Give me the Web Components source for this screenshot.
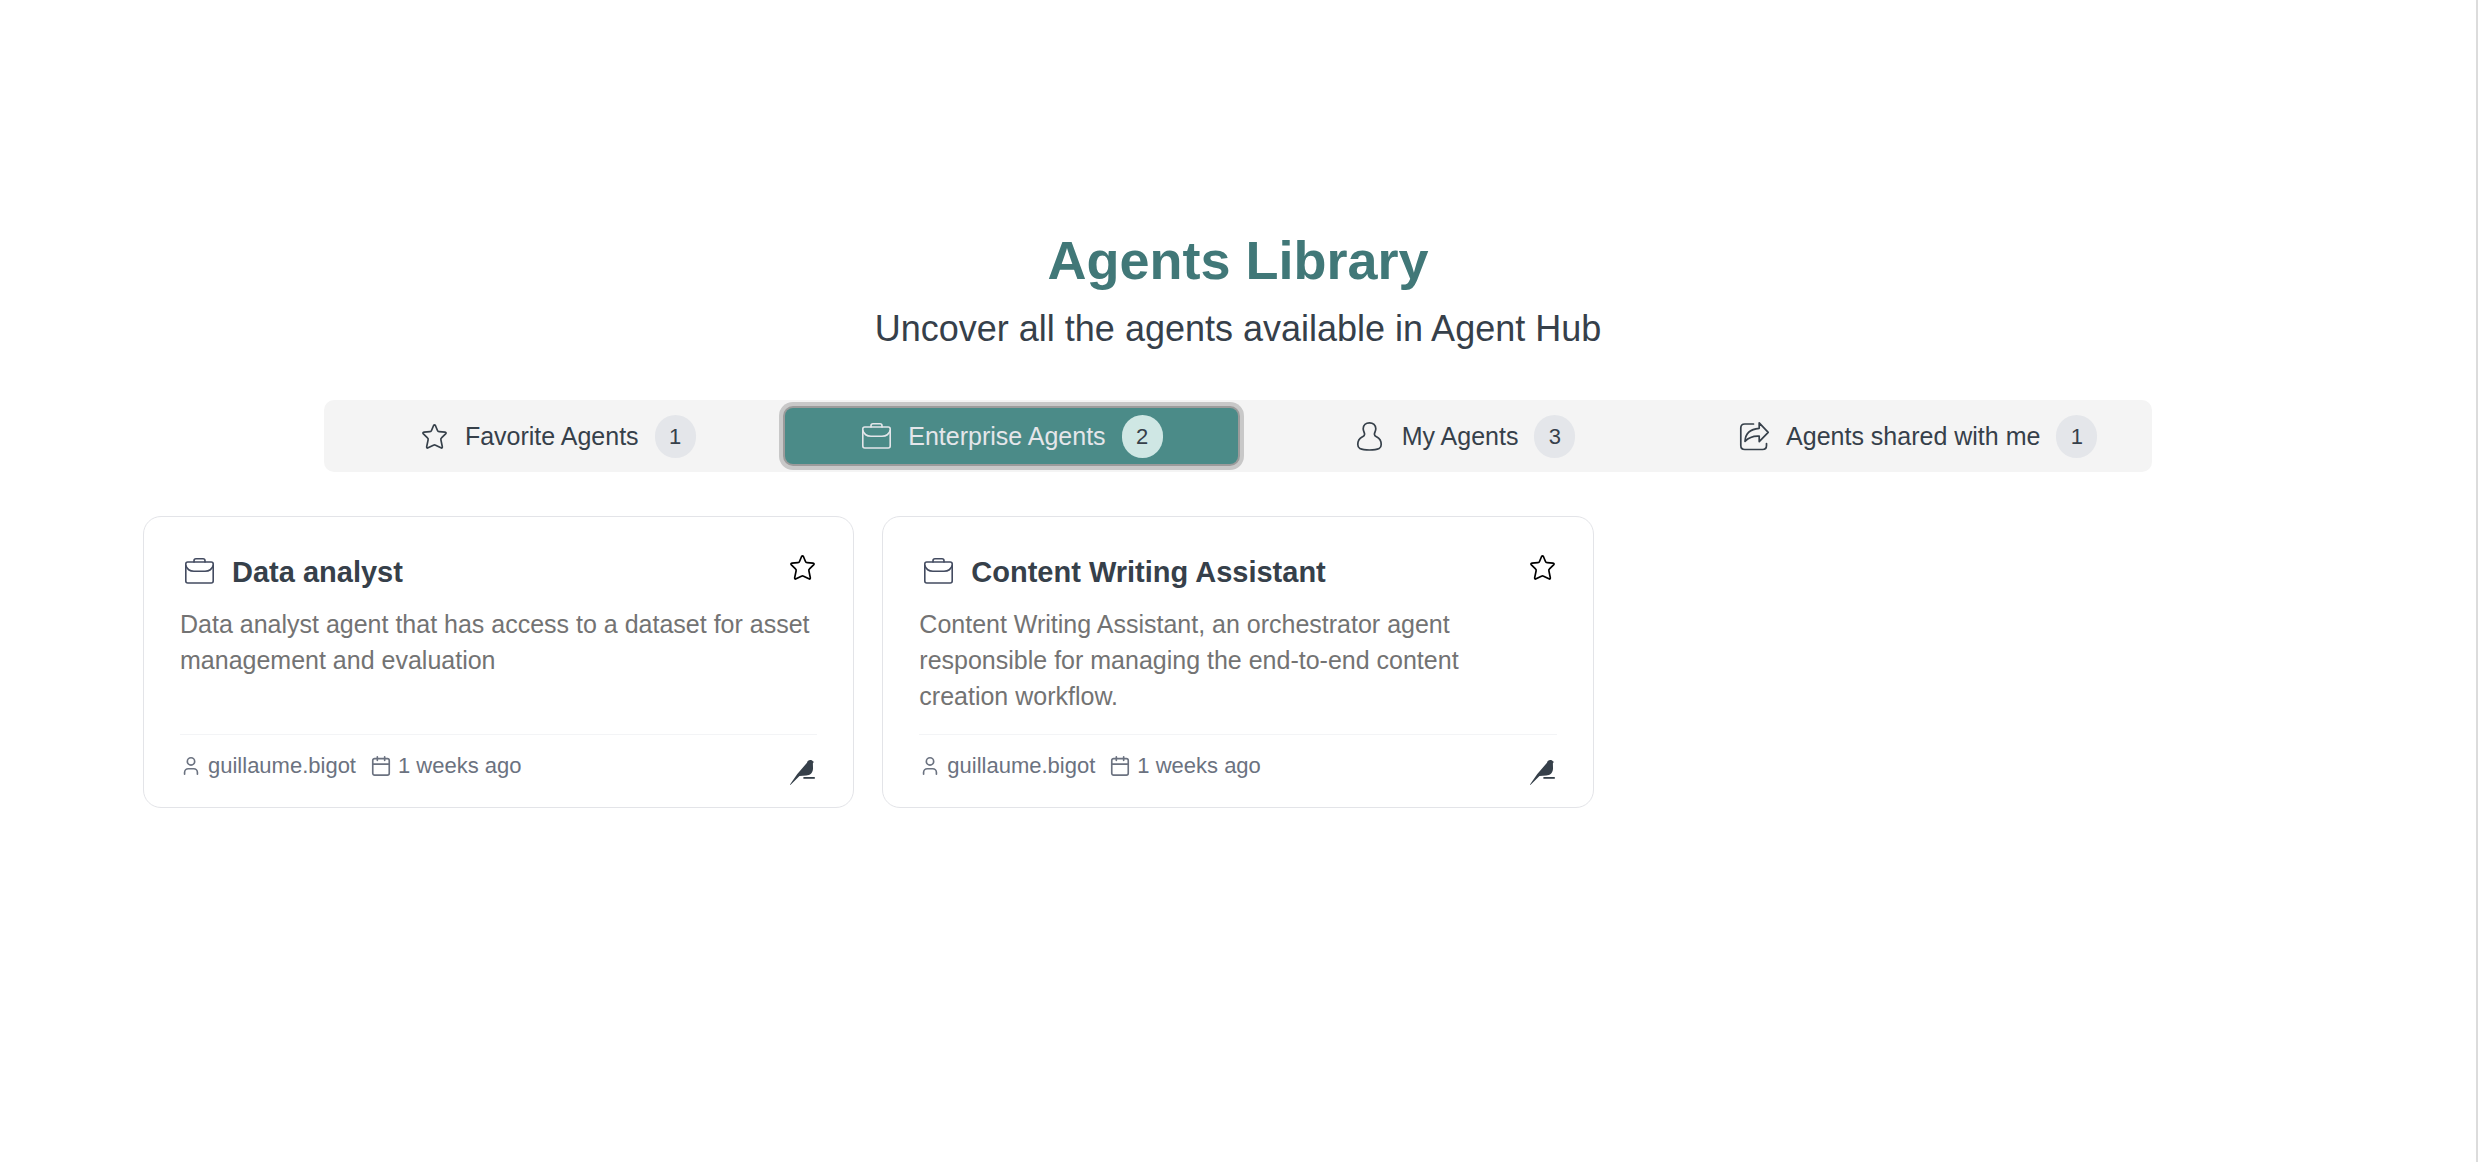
<!DOCTYPE html>
<html lang="en">
<head>
<meta charset="UTF-8">
<meta name="viewport" content="width=device-width, initial-scale=1">
<title>Agents Library</title>
<style>
  :root {
    --brand: #417878;
    --brand-fill: #4b8b88;
    --brand-soft: #cfe7e4;
    --text: #36404a;
    --muted: #737373;
    --meta: #6b7280;
    --bar: #f4f4f4;
    --badge: #e4e6ea;
    --card-border: #e3e4e8;
  }
  body {
    margin: 0;
    background: #fff;
    color: var(--text);
    font-family: "Liberation Sans", Arial, sans-serif;
  }
</style>
</head>
<body>
<agents-page>
  <page-title slot="header">
    Agents Library
    <span slot="subtitle">Uncover all the agents available in Agent Hub</span>
  </page-title>

  <agent-tabs slot="tabs">
    <agent-tab icon="star" count="1">Favorite Agents</agent-tab>
    <agent-tab icon="briefcase" count="2" selected>Enterprise Agents</agent-tab>
    <agent-tab icon="person" count="3">My Agents</agent-tab>
    <agent-tab icon="share" count="1">Agents shared with me</agent-tab>
  </agent-tabs>

  <agent-card name="Data analyst" author="guillaume.bigot" updated="1 weeks ago">Data analyst agent that has access to a dataset for asset management and evaluation</agent-card>
  <agent-card name="Content Writing Assistant" author="guillaume.bigot" updated="1 weeks ago">Content Writing Assistant, an orchestrator agent responsible for managing the end-to-end content creation workflow.</agent-card>
</agents-page>

<script>
const ICONS = {
  star: {
    box: '0 0 25 25', w: 25, h: 25, stroke: 1.7,
    body: '<path d="M11.6 1.5q.9-1.4 1.8 0l2.1 5q.4 1.1 1.6 1.2l5.9.5q1.8.3.6 1.6l-4.1 4q-.9.8-.6 2l1.4 6.8q.2 2-1.4 1.2l-5.3-2.6q-1.1-.5-2.2 0l-5.3 2.6q-1.6.8-1.4-1.2l1.4-6.8q.3-1.2-.6-2l-4.1-4q-1.2-1.3.6-1.6l5.9-.5q1.2-.1 1.6-1.2z"/>'
  },
  briefcase: {
    box: '0 0 29 26', w: 29, h: 26, stroke: 1.6,
    body: '<rect x=".8" y="4" width="27.4" height="21" rx="2"/><path d="M9 4V2.800Q9 .8 11 .8h7q2 0 2 2V4M.8 7.500Q2.500 13.200 9 13.200h11q6.500 0 8.200-5.700"/>'
  },
  person: {
    box: '0 0 25 29', w: 25, h: 29, stroke: 1.7,
    body: '<path d="M12.5 .8C8.900 .8 6.200 3.300 6.200 6.800c0 2.300 1.400 3.600 1.400 5.500 0 1.600-1 2-2.600 2.800C2.200 16.600 .8 19 .8 22.600c0 2 .5 3.200 2 3.900 4.400 2 15 2 19.400 0 1.500-.7 2-1.900 2-3.900 0-3.600-1.400-6-4.200-7.500-1.600-.8-2.600-1.200-2.600-2.800 0-1.900 1.400-3.200 1.400-5.500C18.800 3.300 16.100 .8 12.500 .8z"/>'
  },
  share: {
    box: '0 0 29 29', w: 29, h: 29, stroke: 1.7,
    body: '<path d="M13.5 2H4.800Q.8 2 .8 6v17.500q0 4 4 4h17.700q4 0 4-4v-2"/><path d="M19.200 .9v5.400C10.600 7 5.300 11.600 5 19.400c3.900-4 8.200-5.600 14.200-5.200v5.400l9-9.300z"/>'
  },
  user: {
    box: '0 0 24 24', w: 22, h: 22, stroke: 1.8,
    body: '<path d="M19 21v-2a4 4 0 0 0-4-4H9a4 4 0 0 0-4 4v2"/><circle cx="12" cy="7" r="4"/>'
  },
  calendar: {
    box: '0 0 24 24', w: 22, h: 22, stroke: 1.8,
    body: '<rect x="3" y="4" width="18" height="18" rx="2"/><path d="M8 2v4M16 2v4M3 10h18"/>'
  },
  bird: {
    box: '0 0 25 25', w: 25, h: 25, stroke: 0,
    body: '<path fill="currentColor" d="M17 2.800C17.300 1 18.700 .1 20.200 .1c1.500 0 2.500 .6 2.900 1.500l1.100 .4-1.200 .7c-.3 1.500 .1 3.400 0 6.100-.2 4.200-2.900 6.600-6.800 6.700L9.500 15.900 .4 25 0 24.600 7.300 14z"/><path fill="currentColor" d="M13.400 17H24.800v1.800H13.400z"/>'
  }
};

class AgentIcon extends HTMLElement {
  constructor() {
    super();
    this.attachShadow({ mode: 'open' });
  }
  connectedCallback() {
    const icon = ICONS[this.getAttribute('name')];
    if (!icon) return;
    this.shadowRoot.innerHTML = `
      <style>
        :host { display: inline-flex; align-items: center; justify-content: center; flex: none; }
        svg { display: block; overflow: visible; }
      </style>
      <svg width="${icon.w}" height="${icon.h}" viewBox="${icon.box}" fill="none"
           stroke="${icon.stroke ? 'currentColor' : 'none'}" stroke-width="${icon.stroke}"
           stroke-linecap="round" stroke-linejoin="round" aria-hidden="true">${icon.body}</svg>
    `;
  }
}
customElements.define('agent-icon', AgentIcon);

class PageTitle extends HTMLElement {
  constructor() {
    super();
    this.attachShadow({ mode: 'open' }).innerHTML = `
      <style>
        :host { display: block; text-align: center; }
        h1 { margin: 0 0 12px; font-size: 54px; line-height: 64px; font-weight: 700; color: var(--brand); }
        p  { margin: 0; font-size: 36px; line-height: 50px; }
      </style>
      <h1><slot></slot></h1>
      <p><slot name="subtitle"></slot></p>
    `;
  }
}
customElements.define('page-title', PageTitle);

class AgentTabs extends HTMLElement {
  constructor() {
    super();
    this.attachShadow({ mode: 'open' }).innerHTML = `
      <style>
        :host { display: block; }
        nav {
          display: grid;
          grid-auto-flow: column;
          grid-auto-columns: 1fr;
          padding: 8px;
          border-radius: 10px;
          background: var(--bar);
        }
      </style>
      <nav aria-label="Agent lists"><slot></slot></nav>
    `;
    this.addEventListener('click', e => {
      const tab = e.target.closest('agent-tab');
      if (!tab) return;
      this.querySelectorAll('agent-tab').forEach(t => t.toggleAttribute('selected', t === tab));
    });
  }
}
customElements.define('agent-tabs', AgentTabs);

class AgentTab extends HTMLElement {
  static get observedAttributes() { return ['selected']; }

  constructor() {
    super();
    this.attachShadow({ mode: 'open' });
  }
  connectedCallback() {
    this.shadowRoot.innerHTML = `
      <style>
        :host { display: block; }
        button {
          display: flex;
          align-items: center;
          justify-content: center;
          gap: 16px;
          width: 100%;
          height: 56px;
          padding: 0;
          border: 0;
          border-radius: 8px;
          background: none;
          color: inherit;
          font: inherit;
          font-size: 25px;
          line-height: 36px;
          cursor: pointer;
        }
        agent-icon { width: 32px; }
        agent-icon[name="star"] { width: 28px; }
        .badge {
          min-width: 41px;
          border-radius: 999px;
          background: var(--badge);
          color: var(--text);
          font-size: 22px;
          line-height: 43px;
          text-align: center;
        }
        :host([selected]) button {
          background: var(--brand-fill);
          color: #e4e6ea;
          box-shadow: 0 0 0 2px #9b9b9b, 0 0 0 6px #c8c8c8;
        }
        :host([selected]) .badge { background: var(--brand-soft); }
      </style>
      <button type="button">
        <agent-icon name="${this.getAttribute('icon')}"></agent-icon>
        <span><slot></slot></span>
        <span class="badge">${this.getAttribute('count')}</span>
      </button>
    `;
    this.update();
  }
  attributeChangedCallback() { this.update(); }

  update() {
    const button = this.shadowRoot.querySelector('button');
    if (button) button.setAttribute('aria-pressed', this.hasAttribute('selected'));
  }
}
customElements.define('agent-tab', AgentTab);

class AgentCard extends HTMLElement {
  constructor() {
    super();
    this.attachShadow({ mode: 'open' });
  }
  connectedCallback() {
    this.shadowRoot.innerHTML = `
      <style>
        :host {
          display: flex;
          flex-direction: column;
          box-sizing: border-box;
          padding: 36px 36px 22px;
          border: 1px solid var(--card-border);
          border-radius: 18px;
          background: #fff;
        }
        header { display: flex; align-items: flex-start; gap: 14px; }
        header > agent-icon { width: 38px; height: 36px; color: #434b60; }
        h2 { flex: 1; margin: 0; font-size: 29px; line-height: 38px; font-weight: 700; }
        button { padding: 2px; border: 0; background: none; color: #000; cursor: pointer; }
        button agent-icon { display: flex; }
        p {
          flex: 1;
          margin: 15px 0 20px;
          padding-right: 5px;
          font-size: 25px;
          line-height: 36px;
          color: var(--muted);
        }
        footer {
          display: flex;
          align-items: flex-start;
          gap: 14px;
          padding-top: 15px;
          border-top: 1px solid #f3f4f6;
          font-size: 22px;
          line-height: 32px;
          color: var(--meta);
        }
        .meta { display: flex; align-items: center; gap: 6px; }
        .bird { margin: 10px 2px 0 auto; color: var(--text); }
      </style>
      <header>
        <agent-icon name="briefcase"></agent-icon>
        <h2>${this.getAttribute('name')}</h2>
        <button type="button" aria-label="Add to favorites"><agent-icon name="star"></agent-icon></button>
      </header>
      <p><slot></slot></p>
      <footer>
        <span class="meta"><agent-icon name="user"></agent-icon>${this.getAttribute('author')}</span>
        <span class="meta"><agent-icon name="calendar"></agent-icon>${this.getAttribute('updated')}</span>
        <agent-icon class="bird" name="bird"></agent-icon>
      </footer>
    `;
  }
}
customElements.define('agent-card', AgentCard);

class AgentsPage extends HTMLElement {
  constructor() {
    super();
    this.attachShadow({ mode: 'open' }).innerHTML = `
      <style>
        :host {
          display: block;
          box-sizing: border-box;
          min-height: 100vh;
          padding: 228px 143px 44px;
          border-right: 2px solid #dcdcdc;
        }
        .tabs { width: 83.5%; margin: 46px auto 44px; }
        .grid {
          display: grid;
          grid-template-columns: repeat(3, minmax(0, 1fr));
          gap: 28px;
        }
      </style>
      <slot name="header"></slot>
      <div class="tabs"><slot name="tabs"></slot></div>
      <main class="grid"><slot></slot></main>
    `;
  }
}
customElements.define('agents-page', AgentsPage);
</script>
</body>
</html>
